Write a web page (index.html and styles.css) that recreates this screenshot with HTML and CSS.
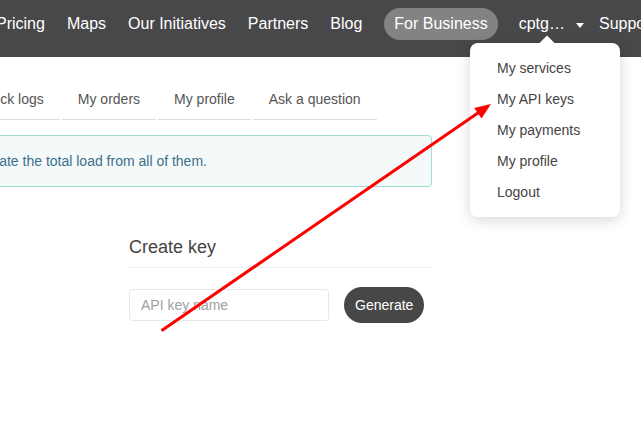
FILE: index.html
```html
<!DOCTYPE html>
<html lang="en">
<head>
<meta charset="utf-8">
<title>API keys</title>
<link rel="stylesheet" href="styles.css">
</head>
<body>
<header class="topbar">
  <nav class="mainnav">
    <a class="nav-link">Pricing</a>
    <a class="nav-link">Maps</a>
    <a class="nav-link">Our Initiatives</a>
    <a class="nav-link">Partners</a>
    <a class="nav-link">Blog</a>
    <a class="nav-link pill">For Business</a>
    <span class="nav-link user">cptg…<span class="caret"></span></span>
    <a class="nav-link">Support</a>
  </nav>
</header>

<main class="content">
  <ul class="tabs">
    <li class="tab">Block logs</li>
    <li class="tab">My orders</li>
    <li class="tab">My profile</li>
    <li class="tab">Ask a question</li>
  </ul>
  <div class="alert">You can generate as many API keys as needed for your subscription. We accumulate the total load from all of them.</div>
  <section class="create">
    <h3 class="create-title">Create key</h3>
    <form class="keyform">
      <input class="keyinput" type="text" placeholder="API key name">
      <button class="btn" type="button">Generate</button>
    </form>
  </section>
</main>

<div class="dropdown">
  <a class="dd-item">My services</a>
  <a class="dd-item">My API keys</a>
  <a class="dd-item">My payments</a>
  <a class="dd-item">My profile</a>
  <a class="dd-item">Logout</a>
</div>

<svg class="annot" width="641" height="429" viewBox="0 0 641 429">
  <line x1="162.5" y1="330" x2="479" y2="112.3" stroke="#ff0000" stroke-width="3" stroke-linecap="round"/>
  <polygon points="491,104 481.5,118.5 474.2,108" fill="#ff0000"/>
</svg>
</body>
</html>
```

FILE: styles.css
```css
* { box-sizing: border-box; }

html, body {
  margin: 0;
  padding: 0;
  width: 641px;
  height: 429px;
  overflow: hidden;
  background: #fff;
  font-family: "Liberation Sans", Arial, sans-serif;
}

.topbar {
  height: 57px;
  background: #48484a;
  padding-top: 8px;
}

.mainnav {
  display: flex;
  align-items: center;
  margin-left: -4px;
  white-space: nowrap;
}

.nav-link {
  flex-shrink: 0;
  display: flex;
  align-items: center;
  height: 32px;
  margin-right: 22px;
  font-size: 16px;
  color: #fff;
}

.pill {
  background: #838383;
  border-radius: 16px;
  padding: 0 10px;
  margin-right: 21px;
}

.user { margin-right: 15px; }

.caret {
  width: 0;
  height: 0;
  margin-left: 11px;
  margin-top: 2px;
  border-left: 4px solid transparent;
  border-right: 4px solid transparent;
  border-top: 5px solid #fff;
}

.content { padding-top: 22px; }

.tabs {
  display: flex;
  list-style: none;
  margin: 0 0 0 -36px;
  padding: 0;
  white-space: nowrap;
}

.tab {
  flex-shrink: 0;
  padding: 0 16px;
  margin-right: 2px;
  height: 41px;
  line-height: 40px;
  font-size: 14px;
  color: #555;
  border-bottom: 1px solid #dedede;
}

.alert {
  margin: 15px 0 0 -525px;
  width: 957px;
  padding: 15px;
  line-height: 20px;
  font-size: 14px;
  color: #3d6f8c;
  background: #f4faf9;
  border: 1px solid #a2d9d0;
  border-radius: 4px;
  white-space: nowrap;
}

.create {
  margin: 50px 0 0 129px;
  width: 303px;
}

.create-title {
  margin: 0;
  padding-bottom: 10px;
  font-size: 18px;
  line-height: 20px;
  font-weight: normal;
  color: #444;
  border-bottom: 1px solid #eeeeee;
}

.keyform {
  display: flex;
  align-items: center;
  margin: 19px 0 0;
}

.keyinput {
  width: 200px;
  height: 32px;
  padding: 0 11px;
  border: 1px solid #e8e8e8;
  border-radius: 3px;
  font-family: "Liberation Sans", Arial, sans-serif;
  font-size: 14px;
  color: #333;
}

.keyinput::placeholder { color: #a0a0a0; }

.btn {
  margin-left: 15px;
  height: 36px;
  padding: 0 11px;
  border: none;
  border-radius: 18px;
  background: #474747;
  color: #fff;
  font-family: "Liberation Sans", Arial, sans-serif;
  font-size: 14px;
}

.dropdown {
  position: absolute;
  left: 470px;
  top: 43px;
  width: 150px;
  padding: 10px 0 9px;
  background: #fff;
  border-radius: 8px;
  box-shadow: 0 3px 14px rgba(0, 0, 0, 0.16);
  display: flex;
  flex-direction: column;
}

.dropdown::before {
  content: "";
  position: absolute;
  left: 71px;
  top: -5px;
  width: 12px;
  height: 12px;
  background: #fff;
  transform: rotate(45deg);
}

.dd-item {
  position: relative;
  line-height: 31px;
  padding-left: 27px;
  font-size: 14px;
  color: #444;
}

.annot {
  position: absolute;
  left: 0;
  top: 0;
  pointer-events: none;
}
```
